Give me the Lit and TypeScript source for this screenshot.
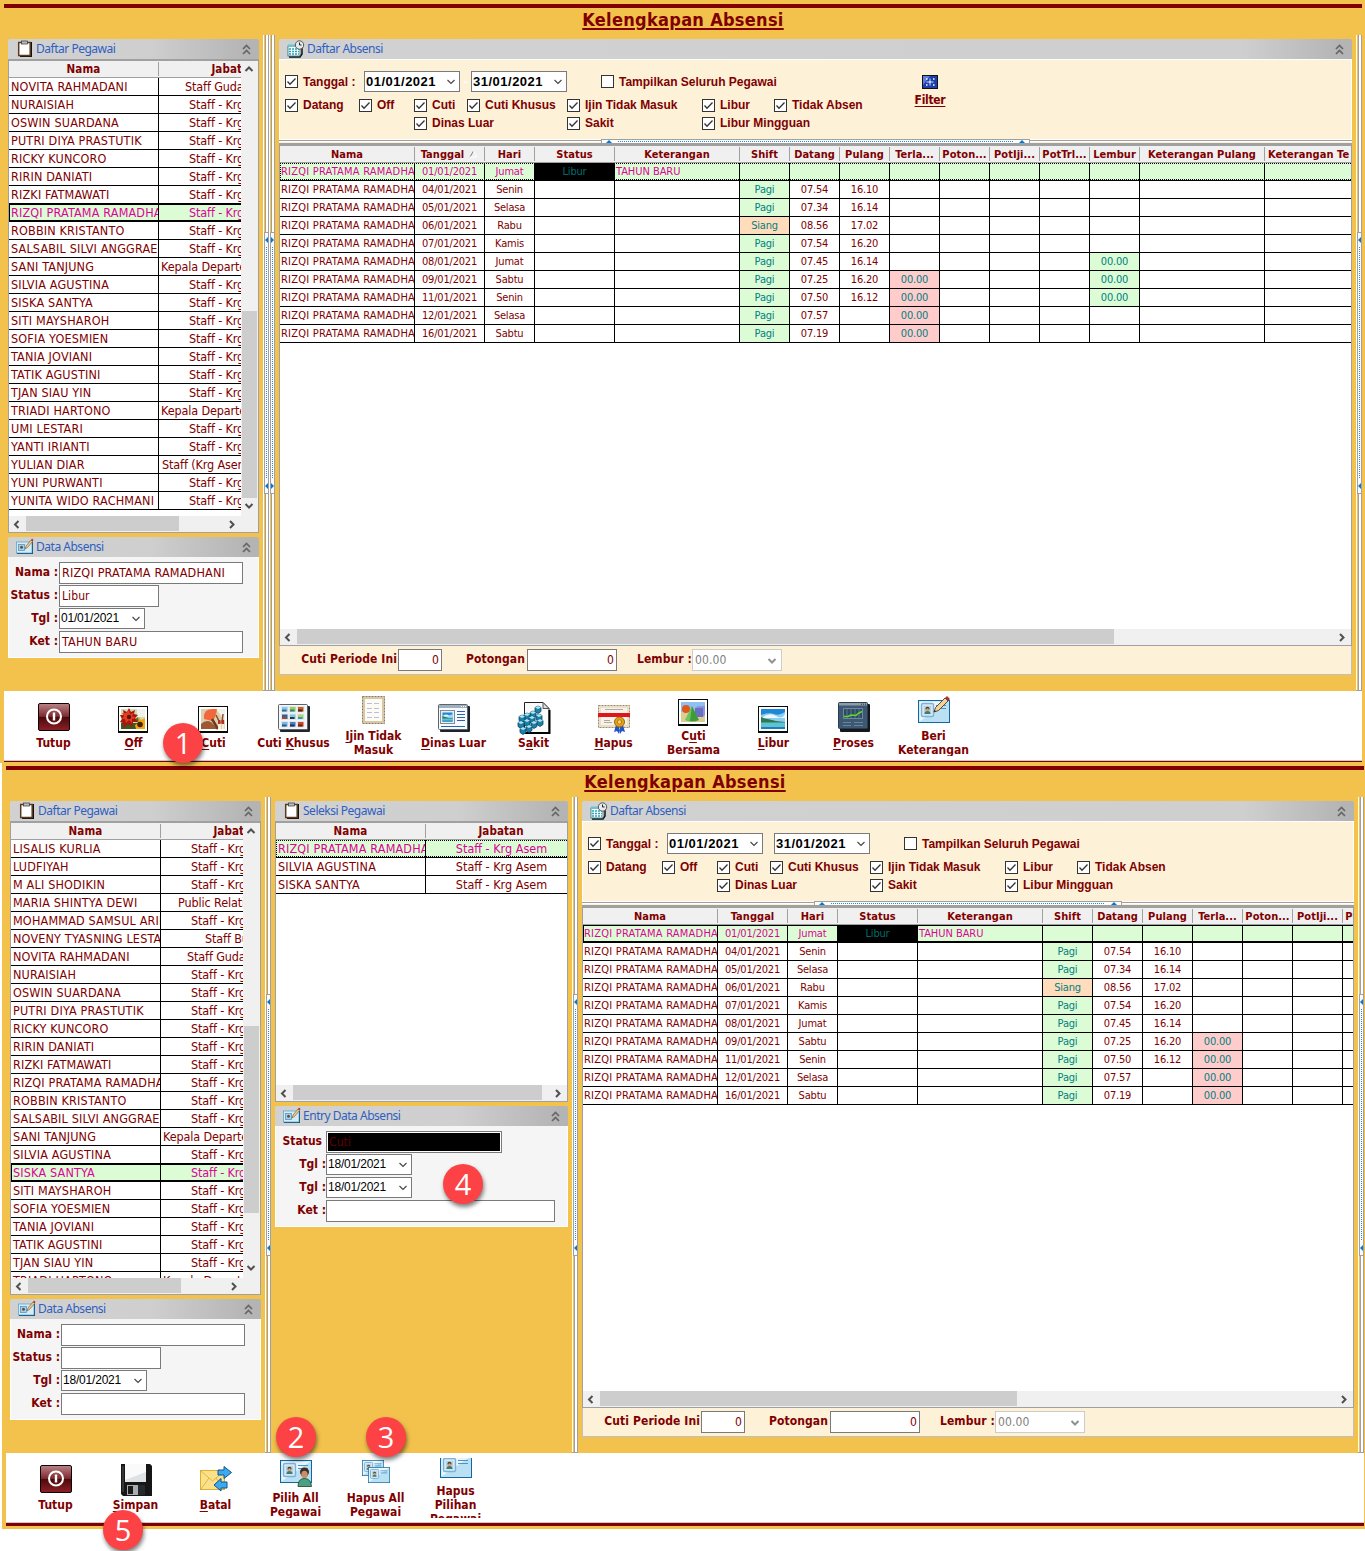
import { LitElement, html, svg, css, nothing, TemplateResult } from "lit";
import { customElement } from "lit/decorators.js";
import { classMap } from "lit/directives/class-map.js";

type Mark = "" | "solid" | "dotted";
interface Person { name: string; job: string; pad: number; }

const krg = (name: string): Person => ({ name, job: "Staff - Krg", pad: 30 });
const p = (name: string, job: string, pad: number): Person => ({ name, job, pad });

const COMMON: Person[] = [
  p("NOVITA RAHMADANI", "Staff Guda", 26),
  krg("NURAISIAH"), krg("OSWIN SUARDANA"), krg("PUTRI DIYA PRASTUTIK"), krg("RICKY KUNCORO"),
  krg("RIRIN DANIATI"), krg("RIZKI FATMAWATI"), krg("RIZQI PRATAMA RAMADHANI"), krg("ROBBIN KRISTANTO"),
  krg("SALSABIL SILVI ANGGRAENI"), p("SANI TANJUNG", "Kepala Departe", 2), krg("SILVIA AGUSTINA"),
  krg("SISKA SANTYA"), krg("SITI MAYSHAROH"), krg("SOFIA YOESMIEN"), krg("TANIA JOVIANI"),
  krg("TATIK AGUSTINI"), krg("TJAN SIAU YIN"), p("TRIADI HARTONO", "Kepala Departe", 2),
];
const STAFF_TOP: Person[] = [
  ...COMMON, krg("UMI LESTARI"), krg("YANTI IRIANTI"), p("YULIAN DIAR", "Staff (Krg Asem", 3),
  krg("YUNI PURWANTI"), krg("YUNITA WIDO RACHMANI"),
];
const STAFF_BOTTOM: Person[] = [
  krg("LISALIS KURLIA"), krg("LUDFIYAH"), krg("M ALI SHODIKIN"), p("MARIA SHINTYA DEWI", "Public Relatio", 17),
  krg("MOHAMMAD SAMSUL ARIF"), p("NOVENY TYASNING LESTARI", "Staff Bu", 44), ...COMMON,
];

const COLS: [string, number][] = [
  ["Nama", 135], ["Tanggal", 70], ["Hari", 50], ["Status", 80], ["Keterangan", 125], ["Shift", 50],
  ["Datang", 50], ["Pulang", 50], ["Terla...", 50], ["Poton...", 50], ["PotIji...", 50], ["PotTrl...", 50],
  ["Lembur", 50], ["Keterangan Pulang", 125], ["Keterangan Te", 125],
];
// day, weekday, shift, in, out, late, overtime
const DAYS: string[][] = [
  ["01", "Jumat", "", "", "", "", ""],
  ["04", "Senin", "Pagi", "07.54", "16.10", "", ""],
  ["05", "Selasa", "Pagi", "07.34", "16.14", "", ""],
  ["06", "Rabu", "Siang", "08.56", "17.02", "", ""],
  ["07", "Kamis", "Pagi", "07.54", "16.20", "", ""],
  ["08", "Jumat", "Pagi", "07.45", "16.14", "", "00.00"],
  ["09", "Sabtu", "Pagi", "07.25", "16.20", "00.00", "00.00"],
  ["11", "Senin", "Pagi", "07.50", "16.12", "00.00", "00.00"],
  ["12", "Selasa", "Pagi", "07.57", "", "00.00", ""],
  ["16", "Sabtu", "Pagi", "07.19", "", "00.00", ""],
];

const CHECKS: [string, number, number][] = [
  ["Datang", 1, 1], ["Off", 2, 1], ["Cuti", 3, 1], ["Cuti Khusus", 4, 1], ["Ijin Tidak Masuk", 5, 1],
  ["Libur", 6, 1], ["Tidak Absen", 7, 1], ["Dinas Luar", 3, 2], ["Sakit", 5, 2], ["Libur Mingguan", 6, 2],
];

/* ---------- icon artwork, 32 x 32 ---------- */
const frame = (inner: unknown) => svg`
  <rect x="0" y="4" width="30" height="27" fill="#0a0a0a"/><rect x="1" y="5" width="28" height="24" fill="#fff"/>
  ${inner}`;
const landscape = (x: number, y: number, w: number, h: number) => svg`
  <svg x=${x} y=${y} width=${w} height=${h} viewBox="0 0 24 20" preserveAspectRatio="none">
    <rect width="24" height="20" fill="#1f87d6"/><path d="M0 6q8-3 13-1t11-2v10H0z" fill="#8ccdf2"/>
    <path d="M2 8q7-5 13-1t9-2v4H2z" fill="#eef8fd"/>
    <path d="M0 8l4 1.500 5 1 6 1.500 9 1v1H0z" fill="#2f7a4d"/><rect y="13.500" width="24" height="6.500" fill="#5fc3d8"/>
    <path d="M0 18h24v2H0z" fill="#1e7fb5"/>
  </svg>`;
const card = (x: number, y: number, w: number, h: number) => svg`
  <svg x=${x} y=${y} width=${w} height=${h} viewBox="0 0 32 23" preserveAspectRatio="none">
    <rect x=".5" y=".5" width="31" height="22" fill="#b9e0f3" stroke="#12689c"/>
    <path d="M1.500 21.500V1.500H30.500z" fill="#e9f7fd"/>
    <rect x="3.500" y="3.500" width="12" height="13" rx="1.500" fill="#d3e8f6" stroke="#7fb0dc" stroke-width="1.400"/>
    <rect x="6" y="6" width="7" height="8" fill="#b4d2d8"/>
    <circle cx="9.500" cy="8.700" r="2" fill="#4c3a2c"/><circle cx="9.500" cy="9.700" r="1.500" fill="#d9a37c"/>
    <path d="M6.500 14q0-3 3-3t3 3z" fill="#3f7d6a"/>
    <path d="M18 5.500h10M18 8.500h10" stroke="#4b93c6" stroke-width="1.200"/>
  </svg>`;
const pencil = svg`<path d="M17 16l1.500-4.500L28 2l3 3-9.500 9.500z" fill="#f0d29a" stroke="#5d4a2f" stroke-width="1"/>
  <path d="M28 2l2-2 3 3-2 2z" fill="#a83236"/><path d="M17 16l.7-2 1.300 1.300z" fill="#222"/>`;

const THUMB_BACK = ["#8cc8ec", "#9ad14a", "#c0602c", "#355f9f", "#7cc8e0", "#a3d977", "#79b7e3", "#4a7fc6", "#c34a2a"];
const THUMB_FRONT = ["#2d6f9a", "#2f7f9a", "#5b1c08", "#a9472a", "#1f3a50", "#3e96a9", "#205f88", "#1e3258", "#70240c"];
const CUBES = [[17, 4], [12, 9], [6, 11], [18, 12], [11, 14], [1, 13], [19, 17], [6, 17], [13, 19], [0, 19], [8, 23], [2, 25]];

const ICONS: Record<string, unknown> = {
  power: svg`<defs><linearGradient id="pw" x2="0" y2="1"><stop offset="0" stop-color="#b98487"/><stop offset=".48" stop-color="#7d2a31"/><stop offset=".5" stop-color="#4a0a0d"/><stop offset="1" stop-color="#8d2027"/></linearGradient></defs>
    <rect x=".5" y="1.500" width="31" height="27" rx="1.500" fill="url(#pw)" stroke="#120304"/>
    <circle cx="16" cy="14.500" r="7" fill="none" stroke="#fff" stroke-width="2"/><path d="M16 10.500v8" stroke="#fff" stroke-width="2.400"/>`,
  flower: frame(svg`<rect x="3" y="7" width="24" height="20" fill="#cfdcb8"/><path d="M3 21h24v6H3z" fill="#3c5a1e"/>
    <path d="M19 7h8v8h-8z" fill="#eef2ea"/><path d="M15 19l5-4 2 6z" fill="#56702c"/>
    <path d="M11 6l2 4 4-2-1 4 4 1-3 3 3 4-5 0-1 5-4-3-4 4-1-5-3-1 2-3-2-4 4 0-1-5 4 2z" fill="#a8160e"/>
    <path d="M11 8l1 4 4-1-2 3 4 2-4 1 0 4-3-3-3 3-1-4-3 0 2-3-2-3 4 0z" fill="#e23d20"/>
    <circle cx="11" cy="15" r="2.200" fill="#5b150a"/>
    <path d="M21 15l2 3 4-2v11h-9l-1-4 3-2z" fill="#f5a512"/><circle cx="22" cy="22.500" r="2.800" fill="#3f2408"/>`),
  palette: frame(svg`<rect x="3" y="7" width="24" height="20" fill="#dccfae"/><path d="M18 7h9v12z" fill="#f1f1e8"/>
    <path d="M6 17q-1-10 8-10h5q-1 9-5 12z" fill="#f2683c"/><path d="M3 22q5-5 10-2l7 7H3z" fill="#9c5a34"/>
    <path d="M14 17l6 10" stroke="#6d3b1c" stroke-width="2.500"/><path d="M18 13l4 8M25 12l-1 9" stroke="#8c4a2a" stroke-width="1.500"/>
    <path d="M20 18h2.500v4H20zM23.500 18H26v4h-2.500z" fill="#b52f22"/><path d="M20 22h3v5h-3zM24 22h2.500v5H24z" fill="#f8eed0"/>`),
  gallery: svg`<rect x="2" y="4" width="30" height="26" rx="1" fill="#20262c"/><rect x=".5" y="2.500" width="29" height="25" rx="1" fill="#f4f6f8" stroke="#59646e"/>
    ${[0, 1, 2].map((r) => [0, 1, 2].map((c) => svg`<rect x=${3 + c * 8} y=${4 + r * 7.5} width="7.500" height="6.500" fill="#e2e6ea"/><rect x=${4 + c * 8} y=${5 + r * 7.5} width="5.500" height="4.500" fill=${THUMB_BACK[r * 3 + c]}/><rect x=${4 + c * 8} y=${7.5 + r * 7.5} width="4.500" height="2" fill=${THUMB_FRONT[r * 3 + c]}/>`))}`,
  note: svg`<rect x="4.500" y="1.500" width="22" height="27" fill="#d8c8a8" stroke="#8b7b60" stroke-dasharray="2 1"/>
    <rect x="7" y="4" width="17" height="22" fill="#fdfbf5"/>
    <path d="M9 8.500h5M16 8.500h5M9 13.500h5M16 13.500h5M9 17.500h5M16 17.500h5M9 22.500h5M16 22.500h5" stroke="#b9bfd8"/>`,
  card: svg`<rect x="2" y="4" width="30" height="26" rx="1" fill="#1d2329"/><rect x=".5" y="2.500" width="29" height="25" rx="1" fill="#f7f9fb" stroke="#59646e"/>
    <rect x="1" y="3" width="28" height="3" fill="#9fb0bf"/><path d="M23 4.500h5" stroke="#fff" stroke-dasharray="1 1"/>
    <rect x="2.500" y="8.500" width="14" height="13" fill="#e7edf2" stroke="#7f8d9a"/>${landscape(4.5, 10.5, 10, 9)}
    <path d="M19 9.500h8M19 12.500h8M19 15.500h8M19 18.500h8M3 24.500h24" stroke="#2a62b4"/>`,
  cubes: svg`<path d="M6.500.5H25l6 6V31H6.500z" fill="#fafafa" stroke="#222"/><path d="M25 .5v6h6z" fill="#ddd" stroke="#555"/><path d="M7 31h24.500V8" fill="none" stroke="#000" stroke-width="2"/>
    ${CUBES.map(([x, y]) => svg`<path d="M${x} ${y + 1.5}l3-1.500 3 1.500v4l-3 2-3-2z" fill="#1f7ea6" stroke="#0b4763" stroke-width=".8"/><path d="M${x} ${y + 1.5}l3-1.500 3 1.500-3 1.500z" fill="#a6e6f5"/>`)}`,
  diploma: svg`<rect x=".5" y="3.500" width="31" height="22" fill="#e9dfcb" stroke="#9b8a6b" stroke-dasharray="2 1"/><rect x="3" y="6" width="26" height="17" fill="#f8f3e8"/>
    <path d="M7 7.500h18M6 20.500h8M6 18.500h6" stroke="#b3a5a0"/><rect x="0" y="11" width="32" height="4" fill="#e0141c"/>
    <path d="M18 23l-2 7 3-1 2 3 1-7zM25 23l2 7-3-1-2 3-1-7z" fill="#1f55c4"/><circle cx="21.500" cy="20" r="5" fill="#e3a21a" stroke="#9a6508"/><circle cx="21.500" cy="20" r="2.200" fill="#f6cf66" stroke="#b67c10"/>`,
  shapes: frame(svg`<rect x="3" y="7" width="24" height="20" fill="#8fc0ef"/><path d="M3 17h24v10H3z" fill="#d8cf93"/>
    <rect x="17" y="13" width="8" height="9" fill="#6b6fc4"/><path d="M17 13l3-2h7v9l-2 2V13z" fill="#8d92df"/>
    <circle cx="8" cy="14" r="4" fill="#e0581e"/><path d="M14 11l7 14q-7 3-13 0z" fill="#3f9a38"/><path d="M14 11l-2 15q-3 0-5-1z" fill="#6cc45e"/>`),
  photo: frame(landscape(3, 7, 24, 20)),
  chart: svg`<rect x="2" y="2" width="30" height="28" rx="1" fill="#14181d"/><rect x=".5" y=".5" width="29" height="26" rx="1" fill="#3d5872" stroke="#2a3d50"/>
    <rect x="1" y="1" width="28" height="2.500" fill="#8e9ba8"/><path d="M23 2.200h5" stroke="#333" stroke-dasharray="1 1"/>
    <rect x="5.500" y="6.500" width="19" height="10" fill="#2f4a63" stroke="#6f879c"/><path d="M9 7v9M13 7v9M17 7v9M21 7v9" stroke="#5c768d"/>
    <path d="M6 14.500h4l3-1.500 5 .5 2-2 4-2" fill="none" stroke="#5ddc2a" stroke-width="1.500"/><path d="M5 20.500h8M16 20.500h9M5 23.500h8M16 23.500h9" stroke="#6a8399"/>`,
  editcard: svg`${card(0, 5, 32, 23)}<g transform="translate(-1 1)">${pencil}</g>`,
  floppy: svg`<path d="M1 0h29l2 2v30H3l-2-2z" fill="#161616"/><path d="M3 2v26" stroke="#555"/><rect x="5" y="0" width="21" height="18" fill="#dfe2e5"/><path d="M5 0h21v8L5 16z" fill="#fafafa"/>
    <rect x="7" y="21" width="18" height="10" fill="#a9adb1"/><rect x="8" y="22" width="5" height="8" fill="#1b1b1b"/><rect x="18" y="21" width="7" height="10" fill="#26292c"/>`,
  mail: svg`<rect x="0.500" y="6.500" width="24" height="19" fill="#fbe28a" stroke="#dcae35"/><path d="M1 7l11.500 10L24 7M1 25l8-11M24 25l-8-11" fill="none" stroke="#dfb648"/>
    <path d="M18 6h6V2.500l7.500 6L24 14.500V11h-6z" fill="#3da9ee" stroke="#0d5592"/><path d="M27 18h-6v-3.500l-7 6.500 7 6V24h6z" fill="#3da9ee" stroke="#0d5592"/>`,
  person: svg`${card(0, 3, 32, 23)}<circle cx="24.500" cy="15" r="4.500" fill="#3f2d22"/><ellipse cx="24.500" cy="17.500" rx="3.200" ry="3.800" fill="#c98f69"/><path d="M18 29.500q0-8 6.500-8t7 8z" fill="#4aa37e" stroke="#20402f" stroke-width=".8"/>`,
  cards: svg`${card(2, 3, 22, 16)}${card(8, 10, 22, 16)}`,
  onecard: svg`<g transform="translate(0 5)">${card(0, 0, 32, 23)}</g>`,
};

const headIcon = (kind: string) => svg`<svg class="hicon" width="18" height="18" viewBox="0 0 18 18">${
  kind === "clip"
    ? svg`<rect x="4" y="2" width="12" height="15" fill="#111"/><rect x="2.700" y="2.500" width="11.500" height="13" fill="#fff" stroke="#5a3a1c" stroke-width="1.500"/><rect x="5.500" y="1" width="6" height="3" fill="#b9bcc0" stroke="#333" stroke-width=".7"/>`
    : kind === "cal"
      ? svg`<path d="M2 17h11l2-3V7" fill="none" stroke="#111" stroke-width="1.500"/><rect x="1" y="6" width="12" height="10" fill="#fff" stroke="#1a6f80" stroke-width=".8"/><rect x="1" y="4.500" width="12" height="2.500" fill="#6bc4d0"/>
        <path d="M2 9h10M2 11.500h10M2 14h10" stroke="#28a3b8" stroke-width="1.500" stroke-dasharray="2 1"/><circle cx="12.500" cy="5" r="4.200" fill="#e6eaee" stroke="#555"/><path d="M12.500 2.500V5h2" fill="none" stroke="#222"/>`
      : svg`<rect x="1" y="4" width="16" height="12" fill="#0d4f78"/><rect x="0.500" y="4" width="15.500" height="11" fill="#d5ecf8" stroke="#3c93c4" stroke-width=".6"/><rect x="2.500" y="6.500" width="6" height="6" fill="#a8cfe8" stroke="#5a94c2" stroke-width=".8"/><circle cx="5.500" cy="9.300" r="1.500" fill="#5d5347"/><path d="M9 11l1-3 5-6 1.500 1.500-5 6z" fill="#eccb8a" stroke="#6d5530" stroke-width=".6"/><path d="M15 2l1-1.500L17.500 2l-1 1.500z" fill="#a33"/>`
}</svg>`;

const chev = (dir: "up" | "down" | "left" | "right", thin = false) => {
  const d = { up: "M1.500 6L5 2.500 8.500 6", down: "M1.500 3L5 6.500 8.500 3", left: "M6.500 1L3 4.500 6.500 8", right: "M3 1L6.500 4.500 3 8" }[dir];
  return html`<svg class="chev" width="10" height="9" viewBox="0 0 10 9"><path d=${d} fill="none" stroke="currentColor" stroke-width=${thin ? 1.1 : 2}/></svg>`;
};

@customElement("app-root")
export class AppRoot extends LitElement {
  static styles = css`
    :host { display: block; position: relative; width: 1365px; height: 1551px; overflow: hidden; background: #fff;
      color: #800000; font: 12px/14px "DejaVu Sans Condensed", "DejaVu Sans", sans-serif; font-stretch: condensed; letter-spacing: 0; }
    * { box-sizing: border-box; }
    .win { background: #f2c24c; padding-left: 4px; width: 1365px; }
    .win.a { height: 763px; }
    .win.b { height: 766px; margin-left: 2px; width: 1363px; }
    .rule { height: 4px; background: #800000; width: 1358px; }
    .a .lead { height: 4px; } .b .lead { height: 3px; }
    .title { height: 27px; width: 1358px; display: flex; justify-content: center; font-weight: bold; font-size: 18px; line-height: 24px;
      text-decoration: underline; text-decoration-thickness: 2px; text-underline-offset: 2px; letter-spacing: 0.3px; }
    .body { display: flex; height: 656px; padding-left: 4px; }
    .col { flex: none; padding-top: 4px; width: 251px; display: flex; flex-direction: column; gap: 4px; }
    .col.sel { width: 293px; } .col.main { width: 1073px; gap: 0; } .b .col.main { width: 772px; }
    .splits { flex: none; display: flex; margin: 0 4px; }
    .split { flex: none; width: 6px; height: 656px; display: flex; flex-direction: column; justify-content: center; border-bottom: 1px solid #a0a0a0;
      background: linear-gradient(90deg, #fff 0 1px, #f2c24c 1px 2px, #a0a0a0 2px 3px, #fff 3px 5px, #a0a0a0 5px 6px); }
    .grip { margin-left: 1px; width: 5px; height: 262px; border: 1px solid #a0a0a0; background: #fbfbff; display: flex; flex-direction: column; justify-content: space-between; align-items: center; padding: 4px 0; }
    .vdots { width: 1px; height: 232px; background: repeating-linear-gradient(#0078d7 0 1px, #fff 1px 2px); opacity: .85; }
    .tri { width: 0; height: 0; border: 3px solid transparent; border-left-width: 0; border-right: 3px solid #0078d7; }
    .tri.fwd { border-right-width: 0; border-left: 3px solid #0078d7; border-right-color: transparent; }
    .tri.up { border: 3px solid transparent; border-top-width: 0; border-bottom: 3px solid #0078d7; }
    .head { height: 20px; flex: none; display: flex; align-items: center; padding: 0 8px 0 8px; border-radius: 2px 2px 0 0; color: #2f5fc0;
      background: linear-gradient(90deg, #d1d1d1 0, #cfcfcf calc(100% - 110px), #b4b4b4 calc(100% - 10px)); font: 12px/18px "Noto Sans", "Open Sans", sans-serif; letter-spacing: -0.48px; }
    .hicon { margin-right: 2px; flex: none; }
    .head .nm { flex: 1; white-space: nowrap; }
    .pane { display: flex; flex-direction: column; }
    .list { border: 1px solid #a0a0a0; border-top-width: 2px; background: #fff; height: 474px; display: grid; grid-template: 1fr 16px / 1fr 17px; }
    .sel .list { height: 281px; grid-template-columns: 1fr; }
    .view { overflow: hidden; min-width: 0; min-height: 0; }
    .hr { display: flex; height: 17px; background: #f0f0f0; border-bottom: 1px solid #a0a0a0; font-weight: bold; }
    .list .hr { font-size: 11.5px; letter-spacing: 0.1px; }
    .hr span { flex: none; display: block; text-align: center; height: 14px; margin-top: 1px; border-right: 1px solid #a0a0a0; white-space: nowrap; overflow: hidden; line-height: 15px; }
    .hr span.last { border-right: 0; }
    .row { display: flex; height: 18px; position: relative; white-space: nowrap; }
    .row > span { flex: none; display: block; height: 18px; line-height: 17px; border-right: 1px solid #000; border-bottom: 1px solid #000; overflow: hidden; text-align: center; }
    .list .row > span { line-height: 17px; font-size: 12.5px; }
    .row > .n { width: 150px; text-align: left; padding-left: 2px; letter-spacing: 0.17px; }
    .row > .j { width: 83px; border-right: 0; text-align: left; letter-spacing: -0.12px; }
    .sel .row > .j { width: 141px; text-align: center; letter-spacing: 0; }
    .row.on > span { background: #dcfcd6; color: #e0009a; }
    .row.on::after { content: ""; position: absolute; inset: 0 0 1px 0; border: 1px solid #000; border-right: 0; }
    .row.dotted::after { border-style: dotted; }
    .vs { background: #f0f0f0; display: flex; flex-direction: column; align-items: center; justify-content: space-between; padding: 4px 1px 6px 0; color: #505050; }
    .hs { background: #f0f0f0; display: flex; align-items: center; color: #505050; grid-column: 1; }
    .corner { background: #f0f0f0; }
    .vt { background: #cdcdcd; width: 15px; height: 187px; margin-bottom: 3px; flex: none; }
    .vs .space { flex: 1; }
    .ht { background: #cdcdcd; height: 15px; margin-bottom: 1px; margin-left: 1px; }
    .hs .l { margin: 0 3px 0 3px; height: 9px; } .hs .grow { flex: 1; } .hs .rt { margin-right: 4px; height: 9px; }
    .chev { display: block; flex: none; }
    .form { height: 101px; background: #f5f5f5; border: 1px solid #fff; border-top: 0; padding-top: 5px; }
    .fr { display: flex; height: 23px; }
    .fr label { width: 50px; text-align: right; font-weight: bold; line-height: 21px; padding-right: 1px; white-space: nowrap; flex: none; letter-spacing: 0; }
    .sel .fr label { padding-right: 0; }
    .sel .fr label.bare { padding-right: 4px; }
    .in { height: 22px; border: 1px solid #7a7a7a; background: #fff; line-height: 20px; padding-left: 2px; white-space: nowrap; letter-spacing: 0.1px; }
    .in.caps { font-size: 12.5px; letter-spacing: 0.18px; }
    .in.black { background: #000; border: 1px solid #7a7a7a; box-shadow: inset 0 0 0 1px #fff; color: #600000; line-height: 20px; }
    .date { flex: none; height: 21px; width: 86px; border: 1px solid #7a7a7a; background: #fff; color: #000; display: flex; align-items: center; justify-content: space-between;
      font: 12px/19px "Liberation Sans", sans-serif; padding: 0 3px 0 1px; letter-spacing: -0.2px; }
    .date .chev { color: #444; }
    .date.big { width: 96px; font-weight: bold; font-size: 13px; letter-spacing: 0.5px; padding-left: 1px; }
    .filter { height: 81px; background: #fdf1d8; border: 1px solid #fff; padding: 11px 0 0 5px; display: grid; grid-template: 21px 50px / 630px 1fr;
      font: bold 12px/14px "Liberation Sans", sans-serif; letter-spacing: 0; }
    .dates { display: flex; align-items: center; grid-column: 1; grid-row: 1; }
    .dates .minus { color: #fff; width: 11px; text-align: center; flex: none; }
    .cks { grid-column: 1; grid-row: 2; display: grid; grid-template: 18px 18px / 74px 55px 53px 100px 135px 72px 100px; padding-top: 4px; }
    .ck { display: flex; align-items: center; gap: 5px; white-space: nowrap; }
    .ck.c1 { grid-column: 1; } .ck.c2 { grid-column: 2; } .ck.c3 { grid-column: 3; } .ck.c4 { grid-column: 4; } .ck.c5 { grid-column: 5; } .ck.c6 { grid-column: 6; } .ck.c7 { grid-column: 7; }
    .ck.l1 { grid-row: 1; } .ck.l2 { grid-row: 2; }
    .ck svg { display: block; flex: none; }
    .w79 { width: 79px; } .m35 { margin-left: 34px; }
    .go { grid-row: 1 / 3; grid-column: 2; justify-self: start; margin-left: -6px; padding-top: 4px; width: 42px; display: flex; flex-direction: column; align-items: center; gap: 4px;
      font: bold 12px/14px "DejaVu Sans Condensed", "DejaVu Sans", sans-serif; letter-spacing: -0.3px; text-decoration: underline; text-underline-offset: 2px; }
    .hsplit { height: 3px; flex: none; background: linear-gradient(#a0a0a0 0 1px, #fff 1px 2px, #fdf1d8 2px 3px); display: flex; justify-content: center; }
    .hgrip { width: 40%; height: 4px; margin-top: -1px; background: #fff; border: 1px solid #a0a0a0; border-bottom: 0; display: flex; align-items: center; justify-content: space-between; padding: 0 4px; }
    .hdots { flex: 1; margin: 0 6px; height: 1px; background: repeating-linear-gradient(90deg, #0078d7 0 1px, #fff 1px 2px); opacity: .85; }
    .grid { height: 503px; border: 1px solid #a0a0a0; border-top-width: 3px; background: #fff; display: flex; flex-direction: column; font-size: 11px; letter-spacing: -0.2px; }
    .grid .view { flex: 1; } .grid .hs { height: 16px; flex: none; }
    .grid .hr { letter-spacing: 0.05px; }
    .grid .row > .left { text-align: left; padding-left: 1px; letter-spacing: -0.05px; }
    .grid .row > .who { letter-spacing: 0.22px; }
    .grid .row > .g { background: #dcfcd6; color: #008080; } .grid .row > .o { background: #ffdcbc; color: #008080; }
    .grid .row > .k { background: #ffcccc; color: #008080; } .grid .row > .blk { background: #000; color: #006c6c; }
    .foot { height: 29px; background: #fdf1d8; border: 1px solid #c0c0c0; border-top: 0; display: flex; padding-top: 3px; font-weight: bold; letter-spacing: 0.1px; }
    .foot label { text-align: right; padding-right: 1px; line-height: 21px; white-space: nowrap; flex: none; }
    .foot .in { text-align: right; padding-right: 2px; font-weight: normal; flex: none; }
    .foot .off { border-color: #ccc; display: flex; justify-content: space-between; align-items: center; padding-right: 4px; color: #808080; }
    .foot .off .chev { color: #909090; }
    .foot .w75 { padding-right: 0; } .foot .w85 { padding-right: 2px; }
    .w118 { width: 118px; } .w44 { width: 44px; } .w85 { width: 85px; } .w90 { width: 90px; } .w75 { width: 75px; }
    .w184 { width: 184px; } .w100 { width: 100px; } .w176 { width: 176px; } .w229 { width: 229px; }
    .bar { height: 70px; width: 1358px; background: #fff; border-bottom: 1px solid #ccc; padding: 5px 0 0 10px; display: flex; }
    .item { flex: none; width: 80px; height: 60px; overflow: hidden; display: flex; flex-direction: column; align-items: center; justify-content: center; gap: 2px; font-weight: bold; }
    .item svg { flex: none; display: block; overflow: visible; }
    .item div { flex: none; text-align: center; white-space: nowrap; margin-right: 1px; }
    .item u { text-underline-offset: 2px; }
    .badge { position: absolute; width: 40px; height: 40px; border-radius: 50%; background: #fc4245; color: #fff; font: 29px/40px "Open Sans", sans-serif; text-align: center; box-shadow: 1px 3px 4px rgba(0,0,0,.5); }
    .b1 { left: 163px; top: 723px; } .b2 { left: 276px; top: 1417px; } .b3 { left: 366px; top: 1417px; } .b4 { left: 443px; top: 1164px; } .b5 { left: 103px; top: 1510px; }
    .thin { height: 1px; background: #800000; width: 1358px; } .thick { height: 3px; background: #800000; width: 1358px; }
  `;

  head(icon: string, name: string) {
    return html`<div class="head">${headIcon(icon)}<span class="nm">${name}</span>
      <svg width="9" height="11" viewBox="0 0 9 11"><path d="M1 5l3.500-3.500L8 5M1 10l3.500-3.500L8 10" fill="none" stroke="#666" stroke-width="1.700"/></svg></div>`;
  }
  hscroll(thumb: number) {
    return html`<div class="hs"><div class="l">${chev("left")}</div><div class="ht" style="width:${thumb}px"></div><div class="grow"></div><div class="rt">${chev("right")}</div></div>`;
  }
  row(person: Person, mark: Mark) {
    return html`<div class=${classMap({ row: true, on: !!mark, dotted: mark === "dotted" })}>
      <span class="n">${person.name}</span><span class="j" style=${person.pad ? `padding-left:${person.pad}px` : ""}>${person.job}</span></div>`;
  }
  staff(people: Person[], selected: string, thumbTop: number) {
    return html`<div class="pane">${this.head("clip", "Daftar Pegawai")}
      <div class="list">
        <div class="view"><div class="hr"><span style="width:150px">Nama</span><span class="last" style="width:150px">Jabatan</span></div>
          ${people.map((x) => this.row(x, x.name === selected ? "solid" : ""))}</div>
        <div class="vs">${chev("up")}<div style="height:${thumbTop}px;flex:none"></div><div class="vt"></div><div class="space"></div>${chev("down")}</div>
        ${this.hscroll(153)}<div class="corner"></div>
      </div></div>`;
  }
  date(value: string, big = false) {
    return html`<div class=${big ? "date big" : "date"}><span>${value}</span>${chev("down", true)}</div>`;
  }
  field(label: string, control: TemplateResult) {
    return html`<div class="fr"><label class=${label.endsWith(":") ? "" : "bare"}>${label}</label>${control}</div>`;
  }
  dataForm(name: string, status: string, date: string, note: string) {
    return html`<div class="pane">${this.head("edit", "Data Absensi")}<div class="form">
      ${this.field("Nama :", html`<div class="in caps w184">${name}</div>`)}
      ${this.field("Status :", html`<div class="in w100">${status}</div>`)}
      ${this.field("Tgl :", this.date(date))}
      ${this.field("Ket :", html`<div class="in caps w184">${note}</div>`)}
    </div></div>`;
  }
  split(dirs: string[]) {
    return html`<div class="splits">${dirs.map((d) => html`<div class="split"><div class="grip"><div class="tri ${d}"></div><div class="vdots"></div><div class="tri ${d}"></div></div></div>`)}</div>`;
  }
  check(label: string, on: boolean, cls: string) {
    return html`<div class="ck ${cls}"><svg width="13" height="13" viewBox="0 0 13 13"><rect x=".5" y=".5" width="12" height="12" fill="#fff" stroke="#333"/>${
      on ? svg`<path d="M2.500 6.500L5 9.200 10.500 3.500" fill="none" stroke="#333" stroke-width="1.300"/>` : nothing}</svg><span>${label}</span></div>`;
  }
  main(first: boolean) {
    const cell = (text: string, i: number, cls = "") => html`<span class=${cls} style="width:${COLS[i][1]}px">${text}</span>`;
    const cols = COLS.slice(0, first ? 15 : 12);
    return html`<div class="col main">${this.head("cal", "Daftar Absensi")}
      <div class="filter">
        <div class="dates">${this.check("Tanggal :", true, "w79")}${this.date("01/01/2021", true)}<span class="minus">${first ? "-" : ""}</span>${this.date("31/01/2021", true)}
          ${this.check("Tampilkan Seluruh Pegawai", false, "m35")}</div>
        <div class="cks">${CHECKS.map(([t, c, r]) => this.check(t, true, `c${c} l${r}`))}</div>
        ${first ? html`<div class="go"><svg width="16" height="14" viewBox="0 0 16 14"><rect width="16" height="14" fill="#111"/><rect x="1" y="1" width="14" height="12" fill="#1c3fae"/><path d="M1 1h7L1 10z" fill="#5d7fe0"/><path d="M8 3.500v7M4.500 7h7" stroke="#cfe0ff"/><path d="M4 4h1.500M11 4h1.500M4 10h1.500M11 10h1.500M7.500 7h1" stroke="#fff" stroke-width="1.500"/></svg><span>Filter</span></div>` : nothing}
      </div>
      <div class="hsplit"><div class="hgrip"><div class="tri up"></div><div class="hdots"></div><div class="tri up"></div></div></div>
      <div class="grid">
        <div class="view"><div class="hr">${cols.map(([t, w], i) => html`<span style=${`width:${w}px;${i === 14 ? "text-align:left;padding-left:3px" : ""}`}>${t}${i === 1 && first ? html`<svg width="9" height="8" viewBox="0 0 9 8" style="margin-left:5px"><path d="M1 7l3.500-6" stroke="#808080" fill="none"/><path d="M4.500 1L8 7H1" stroke="#fff" fill="none"/></svg>` : nothing}</span>`)}</div>
          ${DAYS.map(([d, day, shift, inn, out, late, over], i) => html`<div class=${classMap({ row: true, on: i === 0, dotted: i === 0 && first })}>
            ${cell("RIZQI PRATAMA RAMADHANI", 0, "left who")}${cell(`${d}/01/2021`, 1)}${cell(day, 2)}${cell(i ? "" : "Libur", 3, i ? "" : "blk")}
            ${cell(i ? "" : "TAHUN BARU", 4, "left")}${cell(shift, 5, shift === "Siang" ? "o" : shift ? "g" : "")}${cell(inn, 6)}${cell(out, 7)}
            ${cell(late, 8, late ? "k" : "")}${cell("", 9)}${cell("", 10)}${cell("", 11)}
            ${first ? html`${cell(over, 12, over ? "g" : "")}${cell("", 13)}${cell("", 14)}` : nothing}</div>`)}
        </div>
        ${this.hscroll(first ? 817 : 417)}
      </div>
      <div class="foot"><label class="w118">Cuti Periode Ini</label><div class="in w44">0</div><label class="w85">Potongan</label><div class="in w90">0</div>
        <label class="w75">Lembur :</label><div class="in off w90"><span>00.00</span>${chev("down")}</div></div>
    </div>`;
  }
  item(icon: string, ...lines: (string | TemplateResult)[]) {
    return html`<div class="item"><svg width="32" height="32" viewBox="0 0 32 32">${ICONS[icon]}</svg><div>${lines.map((l, i) => html`${i ? html`<br>` : nothing}${l}`)}</div></div>`;
  }

  render() {
    return html`
      <div class="win a"><div class="lead"></div><div class="rule"></div><div class="title">Kelengkapan Absensi</div>
        <div class="body">
          <div class="col">${this.staff(STAFF_TOP, "RIZQI PRATAMA RAMADHANI", 237)}${this.dataForm("RIZQI PRATAMA RAMADHANI", "Libur", "01/01/2021", "TAHUN BARU")}</div>
          ${this.split(["back", "fwd"])}${this.main(true)}${this.split(["back"])}
        </div>
        <div class="bar">
          ${this.item("power", "Tutup")}${this.item("flower", html`<u>O</u>ff`)}${this.item("palette", html`<u>C</u>uti`)}
          ${this.item("gallery", html`Cuti <u>K</u>husus`)}${this.item("note", html`<u>I</u>jin Tidak`, "Masuk")}${this.item("card", html`<u>D</u>inas Luar`)}
          ${this.item("cubes", html`S<u>a</u>kit`)}${this.item("diploma", html`<u>H</u>apus`)}${this.item("shapes", html`C<u>u</u>ti`, "Bersama")}
          ${this.item("photo", html`<u>L</u>ibur`)}${this.item("chart", html`<u>P</u>roses`)}${this.item("editcard", "Beri", "Keterangan")}
        </div><div class="thin"></div>
      </div>
      <div class="win b"><div class="lead"></div><div class="rule"></div><div class="title">Kelengkapan Absensi</div>
        <div class="body">
          <div class="col">${this.staff(STAFF_BOTTOM, "SISKA SANTYA", 190)}${this.dataForm("", "", "18/01/2021", "")}</div>
          ${this.split(["back"])}
          <div class="col sel"><div class="pane">${this.head("clip", "Seleksi Pegawai")}
            <div class="list"><div class="view"><div class="hr"><span style="width:150px">Nama</span><span class="last" style="width:150px">Jabatan</span></div>
              ${["RIZQI PRATAMA RAMADHANI", "SILVIA AGUSTINA", "SISKA SANTYA"].map((n, i) => this.row(p(n, "Staff - Krg Asem", 10), i ? "" : "dotted"))}</div>
              ${this.hscroll(249)}</div></div>
            <div class="pane">${this.head("edit", "Entry Data Absensi")}<div class="form">
              ${this.field("Status", html`<div class="in black w176">Cuti</div>`)}
              ${this.field("Tgl :", this.date("18/01/2021"))}${this.field("Tgl :", this.date("18/01/2021"))}
              ${this.field("Ket :", html`<div class="in w229"></div>`)}</div></div>
          </div>
          ${this.split(["back"])}${this.main(false)}${this.split(["back"])}
        </div>
        <div class="bar">
          ${this.item("power", "Tutup")}${this.item("floppy", html`<u>S</u>impan`)}${this.item("mail", html`<u>B</u>atal`)}
          ${this.item("person", "Pilih All", "Pegawai")}${this.item("cards", "Hapus All", "Pegawai")}${this.item("onecard", "Hapus", "Pilihan", "Pegawai")}
        </div><div class="thick"></div>
      </div>
      ${[1, 2, 3, 4, 5].map((n) => html`<div class="badge b${n}">${n}</div>`)}
    `;
  }
}
